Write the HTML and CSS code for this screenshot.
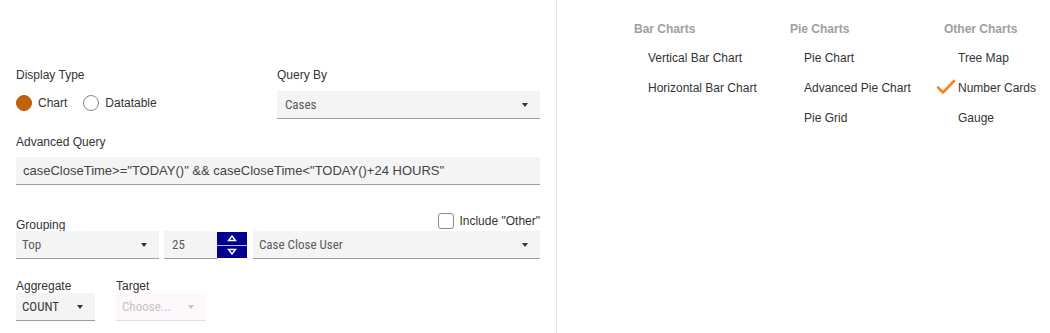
FILE: index.html
```html
<!DOCTYPE html>
<html>
<head>
<meta charset="utf-8">
<link rel="stylesheet" href="styles.css">
</head>
<body>
<div class="page">
  <section class="form">
    <div class="top-row">
      <div class="field">
        <div class="label">Display Type</div>
        <div class="radios">
          <span class="radio checked"></span><span class="rlabel">Chart</span>
          <span class="radio"></span><span class="rlabel">Datatable</span>
        </div>
      </div>
      <div class="field">
        <div class="label">Query By</div>
        <div class="select"><span class="val">Cases</span><i class="caret"></i></div>
      </div>
    </div>

    <div class="field aq">
      <div class="label">Advanced Query</div>
      <div class="input">caseCloseTime&gt;="TODAY()" &amp;&amp; caseCloseTime&lt;"TODAY()+24 HOURS"</div>
    </div>

    <div class="grouping">
      <div class="ghead">
        <span class="label">Grouping</span>
        <label class="check"><span class="box"></span><span>Include "Other"</span></label>
      </div>
      <div class="grow">
        <div class="select s-top"><span class="val">Top</span><i class="caret"></i></div>
        <div class="number">
          <div class="select s-num"><span class="val">25</span></div>
          <div class="spinner">
            <span class="spin up"><svg width="10" height="7" viewBox="0 0 10 7"><path d="M5 1 L8.5 5.5 L1.5 5.5 Z" fill="none" stroke="#fff" stroke-width="1.4"/></svg></span>
            <span class="spin down"><svg width="10" height="7" viewBox="0 0 10 7"><path d="M1.5 1.5 L8.5 1.5 L5 6 Z" fill="none" stroke="#fff" stroke-width="1.4"/></svg></span>
          </div>
        </div>
        <div class="select s-user"><span class="val">Case Close User</span><i class="caret"></i></div>
      </div>
    </div>

    <div class="agg">
      <div class="field f-count">
        <div class="label">Aggregate</div>
        <div class="select"><span class="val dark">COUNT</span><i class="caret"></i></div>
      </div>
      <div class="field f-target">
        <div class="label">Target</div>
        <div class="select disabled"><span class="val">Choose...</span><i class="caret"></i></div>
      </div>
    </div>
  </section>

  <section class="charts">
    <div class="col">
      <div class="heading">Bar Charts</div>
      <div class="item">Vertical Bar Chart</div>
      <div class="item">Horizontal Bar Chart</div>
    </div>
    <div class="col">
      <div class="heading">Pie Charts</div>
      <div class="item">Pie Chart</div>
      <div class="item">Advanced Pie Chart</div>
      <div class="item">Pie Grid</div>
    </div>
    <div class="col">
      <div class="heading">Other Charts</div>
      <div class="item">Tree Map</div>
      <div class="item selected"><svg class="tick" width="20" height="16" viewBox="0 0 20 16"><path d="M2 8.5 L7 13.5 L18 2" fill="none" stroke="#f5861f" stroke-width="2.6" stroke-linecap="round" stroke-linejoin="round"/></svg>Number Cards</div>
      <div class="item">Gauge</div>
    </div>
  </section>
</div>
</body>
</html>
```

FILE: styles.css
```css
* { box-sizing: border-box; }
html, body { margin: 0; padding: 0; background: #fff; }
body {
  font-family: "Liberation Sans", Arial, sans-serif;
  font-size: 12px;
  color: #333;
}
.page {
  display: flex;
  width: 1050px;
  height: 333px;
  overflow: hidden;
}
.form {
  width: 557px;
  flex: none;
  padding: 68px 16px 0 16px;
  border-right: 1px solid #e6e6e6;
}
.label {
  line-height: 14px;
  color: #333;
}
.top-row {
  display: grid;
  grid-template-columns: 245px 263px;
  column-gap: 16px;
}
.top-row .label { margin-bottom: 9px; }
.radios {
  display: flex;
  align-items: center;
  height: 24px;
}
.radio {
  width: 16px;
  height: 16px;
  border-radius: 50%;
  border: 1px solid #8a8a8a;
  background: #fff;
  flex: none;
}
.radio.checked {
  background: #c2620c;
  border-color: #b05708;
}
.rlabel { margin-left: 6px; margin-right: 16px; }

.select {
  position: relative;
  display: flex;
  align-items: center;
  height: 28px;
  background: #f4f4f4;
  border-bottom: 1px solid #9e9e9e;
  padding: 0 8px;
}
.val {
  font-family: "Roboto", sans-serif;
  font-size: 13px;
  font-stretch: 80%;
  color: #5a5a5a;
}
.val.dark { color: #3a3a3a; }
.caret {
  position: absolute;
  right: 12px;
  top: 12px;
  width: 0;
  height: 0;
  border-left: 3.5px solid transparent;
  border-right: 3.5px solid transparent;
  border-top: 4px solid #333;
}

.aq { margin-top: 16px; }
.aq .label { margin-bottom: 8px; }
.input {
  height: 28px;
  background: #f4f4f4;
  border-bottom: 1px solid #9e9e9e;
  padding: 0 7px;
  display: flex;
  align-items: center;
  font-size: 13px;
  color: #444;
}

.grouping { margin-top: 28px; }
.ghead {
  display: flex;
  justify-content: space-between;
  align-items: flex-end;
  height: 18px;
}
.ghead .label { margin-bottom: -1px; }
.check {
  display: flex;
  align-items: center;
  margin-bottom: 2px;
  color: #333;
}
.box {
  width: 16px;
  height: 16px;
  border: 1px solid #8a8a8a;
  border-radius: 3px;
  margin-right: 5px;
}
.grow {
  display: flex;
  margin-top: 0;
}
.s-top { width: 143px; padding-left: 6px; }
.number {
  display: flex;
  margin-left: 5px;
}
.s-num { width: 53px; }
.spinner {
  width: 30px;
  height: 26px;
  margin-top: 1px;
  display: flex;
  flex-direction: column;
  background: #00008f;
}
.spin {
  flex: 1;
  display: flex;
  align-items: center;
  justify-content: center;
}
.spin.down { border-top: 1px solid #b8b8e0; }
.s-user { width: 287px; margin-left: 6px; padding-left: 6px; }

.agg {
  display: flex;
  margin-top: 20px;
}
.f-count { width: 79px; }
.f-count .select { padding-left: 6px; }
.f-target { width: 90px; margin-left: 21px; }
.f-target .select { padding-left: 6px; }
.select.disabled {
  background: #fdf8fc;
  border-bottom-color: #e0dce0;
}
.select.disabled .val { color: #c4c4c4; }
.select.disabled .caret { border-top-color: #c4c4c4; }

.charts {
  flex: 1;
  display: grid;
  grid-template-columns: 156px 154px 1fr;
  align-content: start;
  padding: 21px 0 0 77px;
}
.heading {
  font-weight: bold;
  color: #a0a0a0;
  line-height: 16px;
  margin-bottom: 6px;
}
.item {
  position: relative;
  line-height: 30px;
  padding-left: 14px;
  color: #333;
}
.tick {
  position: absolute;
  left: -8px;
  top: 6px;
}
```
